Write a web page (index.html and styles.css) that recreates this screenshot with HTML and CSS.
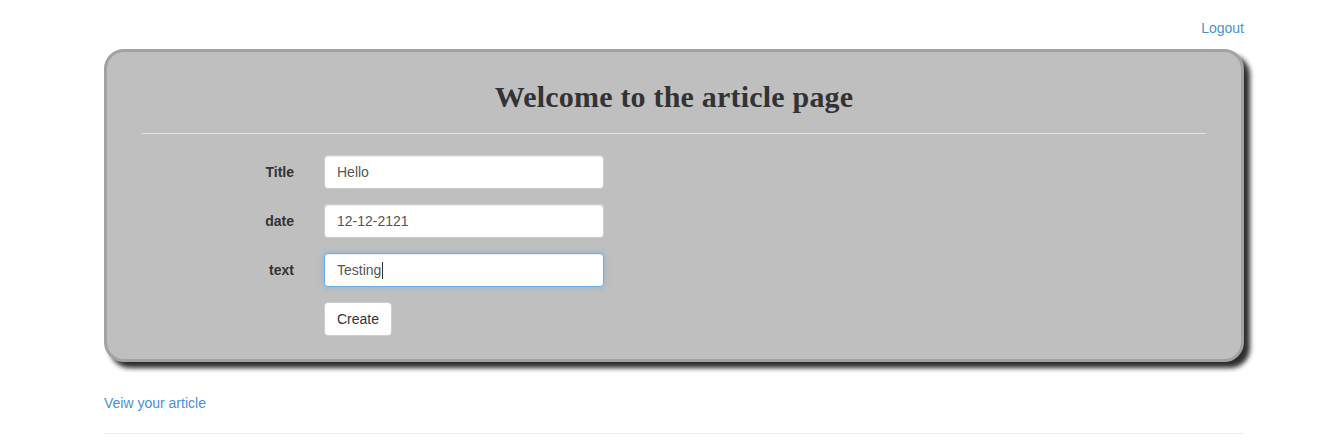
FILE: index.html
```html
<!DOCTYPE html>
<html>
<head>
<meta charset="utf-8">
<link rel="stylesheet" href="styles.css">
</head>
<body>
<div class="page">
  <div class="topbar"><a class="link" href="#">Logout</a></div>
  <div class="panel">
    <h1 class="title">Welcome to the article page</h1>
    <div class="rule"></div>
    <form class="form">
      <div class="row"><label class="lbl">Title</label><input class="field" value="Hello"></div>
      <div class="row"><label class="lbl">date</label><input class="field" value="12-12-2121"></div>
      <div class="row"><label class="lbl">text</label><div class="field focus">Testing<span class="caret"></span></div></div>
      <div class="row"><span class="lbl"></span><button class="btn" type="button">Create</button></div>
    </form>
  </div>
  <div class="footer-link"><a class="link" href="#">Veiw your article</a></div>
  <div class="bottom-rule"></div>
</div>
</body>
</html>
```
FILE: styles.css
```css
* { box-sizing: border-box; }
html, body { margin: 0; padding: 0; background: #fff; }
body { font-family: "Liberation Sans", Arial, sans-serif; font-size: 14px; color: #333; line-height: 1.42857; }
.page { width: 1140px; margin-left: 104px; }
.topbar { display: flex; justify-content: flex-end; padding-top: 19px; height: 49px; }
.link { color: #4a8fcf; text-decoration: none; font-size: 14px; }
.panel {
  background: #bfbfbf;
  border: 3px solid #a2a2a2;
  border-radius: 20px;
  box-shadow: 6px 6px 5px #2e2e2e;
  padding: 0 35px 23px 35px;
}
.title {
  margin: 29px 0 0 0;
  text-align: center;
  font-family: "Liberation Serif", "Times New Roman", serif;
  font-weight: bold;
  font-size: 30px;
  line-height: 32px;
  color: #333;
  letter-spacing: 0.2px;
}
.rule { margin-top: 20px; border-top: 1px solid #e4e4e4; }
.form { margin-top: 21px; display: flex; flex-direction: column; gap: 15px; }
.row { display: flex; align-items: center; gap: 30px; }
.lbl { width: 152px; text-align: right; font-weight: bold; font-size: 14px; color: #333; padding-top: 2px; }
.field {
  width: 280px; height: 34px;
  padding: 6px 12px;
  font-family: "Liberation Sans", Arial, sans-serif;
  font-size: 14px; color: #555;
  background: #fff;
  border: 1px solid #ccc;
  border-radius: 4px;
  box-shadow: inset 0 1px 1px rgba(0,0,0,.075);
  line-height: 20px;
}
.focus { border-color: #66afe9; box-shadow: inset 0 1px 1px rgba(0,0,0,.075), 0 0 6px rgba(102,175,233,.6); display: flex; align-items: center; }
.caret { display: inline-block; width: 1px; height: 17px; background: #333; margin-left: 1px; }
.btn {
  height: 34px; padding: 6px 12px;
  font-family: "Liberation Sans", Arial, sans-serif; font-size: 14px; color: #333;
  background: #fff; border: 1px solid #ccc; border-radius: 4px; line-height: 20px;
}
.footer-link { margin-top: 31px; height: 20px; line-height: 20px; }
.bottom-rule { margin-top: 20px; border-top: 1px solid #eee; }
```
